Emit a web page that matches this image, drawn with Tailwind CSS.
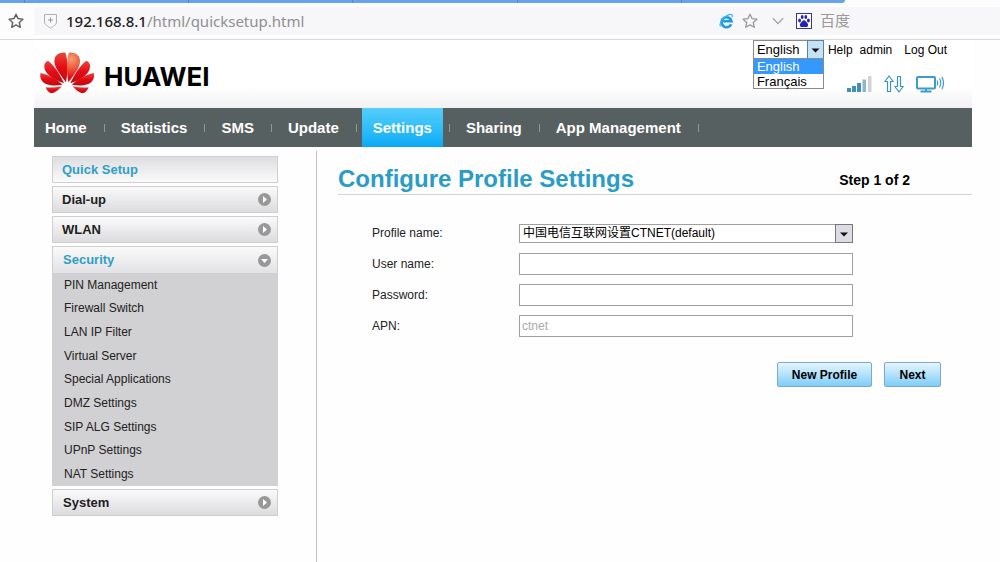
<!DOCTYPE html>
<html lang="en">
  <head>
    <meta charset="UTF-8" />
    <meta name="viewport" content="width=device-width, initial-scale=1.0" />
    <script src="https://cdn.jsdelivr.net/npm/@tailwindcss/browser@4"></script>
    <title>Quick Setup</title>
  </head>
  <body class="flex flex-col min-h-screen bg-[#fefefe] text-[#222] text-xs font-['Liberation_Sans','Noto_Sans_CJK_SC',sans-serif]">
    <!-- Browser bar -->
    <div class="border-b border-[#d9d9df] bg-[#fdfdfe]">
      <div class="flex h-[3px] mr-[155px] rounded-br-lg bg-[#69a2e6]">
        <span class="w-[25px] border-r border-[#5588c8]"></span>
        <span class="flex-1 border-r border-[#5588c8]"></span>
        <span class="flex-1 border-r border-[#5588c8]"></span>
        <span class="flex-1 border-r border-[#5588c8]"></span>
        <span class="flex-1 border-r border-[#5588c8]"></span>
        <span class="flex-1"></span>
      </div>
      <div class="flex items-center h-9">
        <button aria-label="Bookmarks" class="flex w-[34px] pl-2">
          <svg class="size-4" viewBox="0 0 16 16" fill="none" stroke="#666" stroke-width="1.5" stroke-linejoin="round"><path d="M8 1.2l2 4.4 4.9.6-3.6 3.3 1 4.8L8 11.9l-4.3 2.4 1-4.8L1.1 6.2l4.9-.6z" /></svg>
        </button>
        <div class="flex flex-1 items-center h-7 bg-[#f7f6f8]">
          <svg class="ml-[9px] w-[15px] h-4" viewBox="0 0 15 16" fill="none" stroke="#b0b0b4"><path d="M1.5 1.5h12v7.5c0 3-3.5 4.5-6 6-2.5-1.5-6-3-6-6z" /><path d="M7.5 4.5v5M5 7h5" stroke="#999" /></svg>
          <div role="textbox" aria-label="Address" tabindex="0" class="flex-1 ml-2 text-[15px] leading-5 font-['Noto_Sans',sans-serif] text-[#909090]"><span class="font-medium text-[#222]">192.168.8.1</span>/html/quicksetup.html</div>
          <div class="flex items-center w-[281px]">
            <button aria-label="Browser mode">
              <svg class="w-[15px] h-4" viewBox="0 0 15 16" fill="none"><path d="M12.2 11.2A5 5 0 1 1 12.5 8.3H4.2" stroke="#1d9be0" stroke-width="2.6" /><path d="M1.5 13.5C-.5 10 5 3 10 1.6c2.5-.7 4 .2 3 2.6" stroke="#3cb4ee" stroke-width="1.2" /></svg>
            </button>
            <button aria-label="Add bookmark" class="ml-2">
              <svg class="size-4" viewBox="0 0 16 16" fill="none" stroke="#999" stroke-width="1.3" stroke-linejoin="round"><path d="M8 1.2l2 4.4 4.9.6-3.6 3.3 1 4.8L8 11.9l-4.3 2.4 1-4.8L1.1 6.2l4.9-.6z" /></svg>
            </button>
            <button aria-label="More" class="ml-[14px]">
              <svg class="w-3 h-2" viewBox="0 0 12 8" fill="none" stroke="#aaa" stroke-width="1.5"><path d="M.8 1.2L6 6.5l5.2-5.3" /></svg>
            </button>
            <a href="#" class="flex items-center ml-3 text-[15px] leading-5 text-[#999]">
              <svg class="mr-2 size-4" viewBox="0 0 16 16"><rect x=".5" y=".5" width="15" height="15" fill="#fff" stroke="#34349c" /><g fill="#2222b8"><ellipse cx="3.6" cy="7.5" rx="1.4" ry="1.9" /><ellipse cx="6.2" cy="4" rx="1.4" ry="2" /><ellipse cx="9.8" cy="4" rx="1.4" ry="2" /><ellipse cx="12.4" cy="7.5" rx="1.4" ry="1.9" /><path d="M8 7.2c1.6 0 2 1.7 3.2 2.7 1.6 1.5 1 4-.9 4-1.2 0-3.4 0-4.6 0-1.9 0-2.500-2.500-.9-4C6 8.900 6.400 7.200 8 7.200z" /></g></svg>
              百度
            </a>
          </div>
        </div>
      </div>
    </div>

    <div class="flex flex-col flex-1 ml-[34px] mr-7">
      <!-- Header -->
      <header class="flex justify-between h-[68px] bg-linear-to-b from-white from-70% to-[#f1f1f2]">
        <a href="#" class="flex items-center gap-[10px] h-[66px] pl-[6px] text-black">
          <svg class="w-[54px] h-[42px]" viewBox="15 11 162 126" aria-hidden="true">
            <defs>
              <radialGradient id="glow" gradientUnits="userSpaceOnUse" cx="84" cy="32" r="80">
                <stop offset="0" stop-color="#f5a070" />
                <stop offset=".35" stop-color="#ec5a40" />
                <stop offset=".7" stop-color="#e60a14" />
                <stop offset="1" stop-color="#d00c14" />
              </radialGradient>
              <linearGradient id="red" x1="0" y1="0" x2="0" y2="1">
                <stop offset="0" stop-color="#e8483e" />
                <stop offset=".5" stop-color="#e60a14" />
                <stop offset="1" stop-color="#b80e14" />
              </linearGradient>
            </defs>
            <g fill="url(#red)">
              <path d="M93 102C66 68 50 44 62 24 69 14 82 12 91 13 100 36 98 72 93 102z" />
              <path d="M87 105C52 94 25 74 28 51 29 44 33 40 39 37 56 50 76 78 87 105z" />
              <path d="M82 109C58 114 28 112 19 94 15 88 15 80 17 74 40 79 66 93 82 109z" />
              <path d="M80 114C70 126 58 135 49 135 41 133 35 125 32 117 48 119 64 117 80 114z" />
            </g>
            <g transform="translate(193 0) scale(-1 1)">
              <path fill="url(#glow)" d="M93 102C66 68 50 44 62 24 69 14 82 12 91 13 100 36 98 72 93 102z" />
              <g fill="url(#red)">
                <path d="M87 105C52 94 25 74 28 51 29 44 33 40 39 37 56 50 76 78 87 105z" />
                <path d="M82 109C58 114 28 112 19 94 15 88 15 80 17 74 40 79 66 93 82 109z" />
                <path d="M80 114C70 126 58 135 49 135 41 133 35 125 32 117 48 119 64 117 80 114z" />
              </g>
            </g>
          </svg>
          <span class="pt-2 text-[26px] leading-8 font-bold font-['Inter',sans-serif]">HUAWEI</span>
        </a>

        <div class="flex flex-col gap-4 pr-[25px]">
          <div class="flex items-center text-black">
            <div class="relative w-[71px] mr-1">
              <select aria-label="Language" class="block w-full h-[19px] pl-[3px] appearance-none border border-[#8a8a8a] bg-white text-[13px] leading-4">
                <option>English</option>
                <option>Français</option>
              </select>
              <svg class="absolute top-0 right-0 w-[17px] h-[19px] pointer-events-none" viewBox="0 0 17 19"><rect x=".5" y=".5" width="16" height="18" fill="#c4e2f4" stroke="#5a83a2" /><path d="M4.5 8.5h8L8.5 12.5z" fill="#111" /></svg>
              <ul role="listbox" aria-label="Languages" class="absolute top-[18px] left-0 z-10 w-full h-[31px] border border-[#8a8a8a] bg-white text-[13px] leading-[15px]">
                <li role="option" aria-selected="true" class="pl-[3px] bg-[#3399fd] text-white">English</li>
                <li role="option" aria-selected="false" class="pl-[3px]">Français</li>
              </ul>
            </div>
            <a href="#">Help</a>
            <a href="#" class="ml-[7px]">admin</a>
            <a href="#" class="ml-3">Log Out</a>
          </div>
          <div class="flex items-center justify-end gap-3 pr-[3px]">
            <svg class="w-[25px] h-[17px]" viewBox="0 0 25 17"><path d="M0 12h4v4H0z" fill="#3f8fb8" /><path d="M5 10h4v6H5z" fill="#3f8fb8" /><path d="M10 7h4v9h-4z" fill="#3f8fb8" /><path d="M15.5 3.5h3.5V16h-3.5z" fill="#8fb6c8" /><path d="M21 0h3.5v16H21z" fill="#cfd2d6" /></svg>
            <svg class="w-5 h-[18px]" viewBox="0 0 20 18" fill="#fff" stroke="#3a93b4" stroke-width="1.2" stroke-linejoin="round"><path d="M5 1L.8 6.5h2.7v10h3v-10h2.7z" /><path d="M15 17l4.2-5.5h-2.7v-10h-3v10h-2.7z" /></svg>
            <svg class="w-7 h-[18px]" viewBox="0 0 28 18" fill="none" stroke="#3a9cc8"><rect x="1" y="2" width="18" height="11.5" rx="1" stroke-width="2" /><path d="M10 14v2M4.5 16.5h11" stroke-width="1.8" /><path d="M21 5.5q1.5 2.5 0 5M23.5 3.5q2.5 4.5 0 9M26 2q3 6 0 12" stroke-width="1.2" /></svg>
          </div>
        </div>
      </header>

      <!-- Main menu -->
      <nav class="flex items-center h-[39px] bg-[#576060] text-[15px] font-bold text-white">
        <a href="#" class="px-[11px]">Home</a>
        <span class="ml-[6px] mr-[5px] w-px h-2 bg-[#8f9898]"></span>
        <a href="#" class="px-[11px]">Statistics</a>
        <span class="ml-[6px] mr-[5px] w-px h-2 bg-[#8f9898]"></span>
        <a href="#" class="px-[11px]">SMS</a>
        <span class="ml-[6px] mr-[5px] w-px h-2 bg-[#8f9898]"></span>
        <a href="#" class="px-[11px]">Update</a>
        <span class="ml-[6px] mr-[5px] w-px h-2 bg-[#8f9898]"></span>
        <a href="#" aria-current="page" class="flex items-center self-stretch px-[11px] bg-linear-to-b from-[#55ccfb] via-[#2fbffa] to-[#06a9f4]">Settings</a>
        <span class="ml-[6px] mr-[5px] w-px h-2 bg-[#8f9898]"></span>
        <a href="#" class="px-[11px]">Sharing</a>
        <span class="ml-[6px] mr-[5px] w-px h-2 bg-[#8f9898]"></span>
        <a href="#" class="px-[11px]">App Management</a>
        <span class="ml-[6px] mr-[5px] w-px h-2 bg-[#8f9898]"></span>
      </nav>

      <div class="flex flex-1">
        <!-- Side menu -->
        <aside class="flex flex-col gap-[3px] w-[226px] ml-[18px] pt-[9px] text-[13px] font-bold">
          <a href="#" class="flex items-center h-[27px] px-[9px] border border-[#cfcfd1] bg-linear-to-b from-[#dedee0] to-[#fafafb] text-[#2f9fc6]">Quick Setup</a>
          <a href="#" class="flex items-center justify-between h-[27px] pl-[9px] pr-[6px] border border-[#cfcfd1] bg-linear-to-b from-[#fafafb] to-[#dcdcde]">
            Dial-up
            <svg class="size-[13px]" viewBox="0 0 13 13"><circle cx="6.5" cy="6.5" r="6.5" fill="#989898" /><path d="M5 3l4 3.5L5 10z" fill="#fff" /></svg>
          </a>
          <a href="#" class="flex items-center justify-between h-[27px] pl-[9px] pr-[6px] border border-[#cfcfd1] bg-linear-to-b from-[#fafafb] to-[#dcdcde]">
            WLAN
            <svg class="size-[13px]" viewBox="0 0 13 13"><circle cx="6.5" cy="6.5" r="6.5" fill="#989898" /><path d="M5 3l4 3.5L5 10z" fill="#fff" /></svg>
          </a>
          <div>
            <a href="#" class="flex items-center justify-between h-[27px] pl-[10px] pr-[6px] border border-b-0 border-[#cfcfd1] bg-linear-to-b from-[#fafafb] to-[#e2e2e4] text-[#2f9fc6]">
              Security
              <svg class="size-[13px]" viewBox="0 0 13 13"><circle cx="6.5" cy="6.5" r="6.5" fill="#989898" /><path d="M3 5h7L6.5 9z" fill="#fff" /></svg>
            </a>
            <ul class="grid items-center min-h-[213px] pl-3 bg-[#d1d0d2] text-xs font-normal">
              <li><a href="#">PIN Management</a></li>
              <li><a href="#">Firewall Switch</a></li>
              <li><a href="#">LAN IP Filter</a></li>
              <li><a href="#">Virtual Server</a></li>
              <li><a href="#">Special Applications</a></li>
              <li><a href="#">DMZ Settings</a></li>
              <li><a href="#">SIP ALG Settings</a></li>
              <li><a href="#">UPnP Settings</a></li>
              <li><a href="#">NAT Settings</a></li>
            </ul>
          </div>
          <a href="#" class="flex items-center justify-between h-[27px] pl-[10px] pr-[6px] border border-[#cfcfd1] bg-linear-to-b from-[#fafafb] to-[#dcdcde]">
            System
            <svg class="size-[13px]" viewBox="0 0 13 13"><circle cx="6.5" cy="6.5" r="6.5" fill="#989898" /><path d="M5 3l4 3.5L5 10z" fill="#fff" /></svg>
          </a>
        </aside>

        <!-- Profile form -->
        <main class="flex-1 ml-[38px] mt-1 pl-[21px] border-l border-[#c4c4c6]">
          <div class="flex items-center justify-between h-11 pt-3 pr-[62px] border-b border-[#d4d4d6]">
            <h1 class="text-2xl font-bold text-[#2a9cc6]">Configure Profile Settings</h1>
            <span class="pt-[3px] text-sm font-bold text-black">Step 1 of 2</span>
          </div>
          <form class="pt-[27px]">
            <div class="grid grid-cols-[147px_1fr] items-center gap-y-[9px] pl-[34px] pr-[119px]">
              <label for="profile">Profile name:</label>
              <div class="flex items-center relative h-[22px]">
                <select id="profile" class="w-full h-[19px] pl-[3px] appearance-none border border-[#a0a0a0] bg-white leading-4 text-black">
                  <option>中国电信互联网设置CTNET(default)</option>
                </select>
                <svg class="absolute right-0 w-[18px] h-[19px] pointer-events-none" viewBox="0 0 18 19"><rect x=".5" y=".5" width="17" height="18" fill="#dcdce2" stroke="#77777c" /><path d="M5 8.5h8L9 12.5z" fill="#111" /></svg>
              </div>
              <label for="user">User name:</label>
              <input id="user" type="text" class="h-[22px] px-[2px] border border-[#a0a0a0] bg-white" />
              <label for="password">Password:</label>
              <input id="password" type="password" class="h-[22px] px-[2px] border border-[#a0a0a0] bg-white" />
              <label for="apn">APN:</label>
              <input id="apn" type="text" value="ctnet" disabled class="h-[22px] px-[2px] border border-[#a0a0a0] bg-white text-[#aaa]" />
            </div>
            <div class="flex justify-end gap-3 mt-[25px] pr-[31px] font-bold text-black">
              <button type="button" class="h-[25px] w-[95px] border border-[#7fa9c6] rounded-xs bg-linear-to-b from-[#e4f5fe] to-[#7dcdf8]">New Profile</button>
              <button type="button" class="h-[25px] w-[57px] border border-[#7fa9c6] rounded-xs bg-linear-to-b from-[#e4f5fe] to-[#7dcdf8]">Next</button>
            </div>
          </form>
        </main>
      </div>
    </div>
  </body>
</html>
